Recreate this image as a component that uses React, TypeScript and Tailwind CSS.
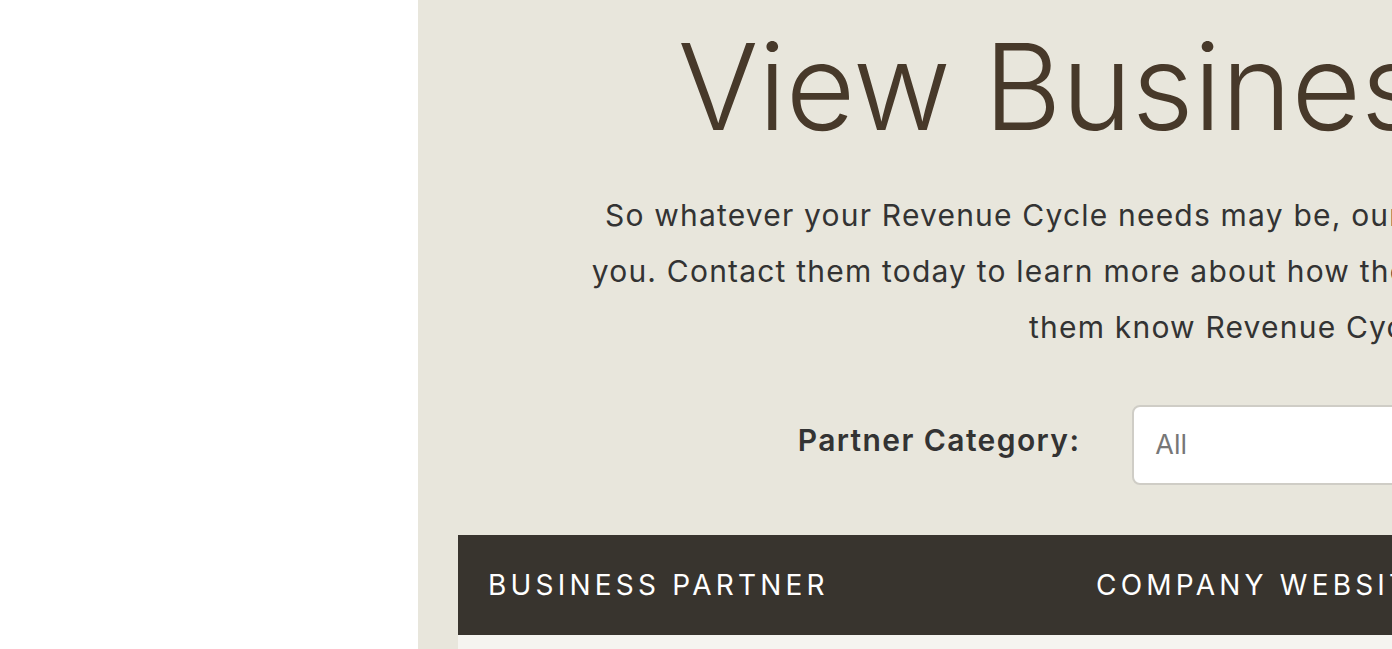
import React from "react";

export default function App() {
  const font = { fontFamily: '"Inter", "Open Sans", sans-serif' } as React.CSSProperties;
  return (
    <div className="w-[1392px] h-[649px] overflow-hidden bg-white flex" style={font}>
      <div className="w-[418px] shrink-0 bg-white" />
      <div className="w-[1824px] shrink-0 bg-[#e8e6dc] px-[40px] flex flex-col">
        <h1 className="text-center text-[120px] leading-[1] font-light text-[#47392a] pt-[27px] tracking-[-0.3px]">
          View Business Partners
        </h1>
        <p className="text-center text-[30px] leading-[56px] text-[#333333] mt-[40px] tracking-[1.2px]">
          So whatever your Revenue Cycle needs may be, our trusted business partners are here to help
          <br />
          you. Contact them today to learn more about how they can support your organization, and do let
          <br />
          them know Revenue Cycle referred you
        </p>
        <div className="flex items-center justify-center gap-[52px] mt-[50px]">
          <span className="text-[30px] font-semibold text-[#333333] tracking-[1.4px] pb-[9px]">Partner Category:</span>
          <div className="w-[730px] h-[80px] bg-white border-2 border-[#cfcdc6] rounded-[8px] flex items-center px-[21px] text-[27px] text-[#777777]">
            All
          </div>
        </div>
        <div className="mt-[50px]">
          <div className="h-[100px] bg-[#38342e] flex items-center text-white text-[28px] tracking-[4.2px] uppercase">
            <div className="w-[638px] pl-[30px]">Business Partner</div>
            <div>Company Website</div>
          </div>
          <div className="h-[60px] bg-[#f5f4f0]" />
        </div>
      </div>
    </div>
  );
}
